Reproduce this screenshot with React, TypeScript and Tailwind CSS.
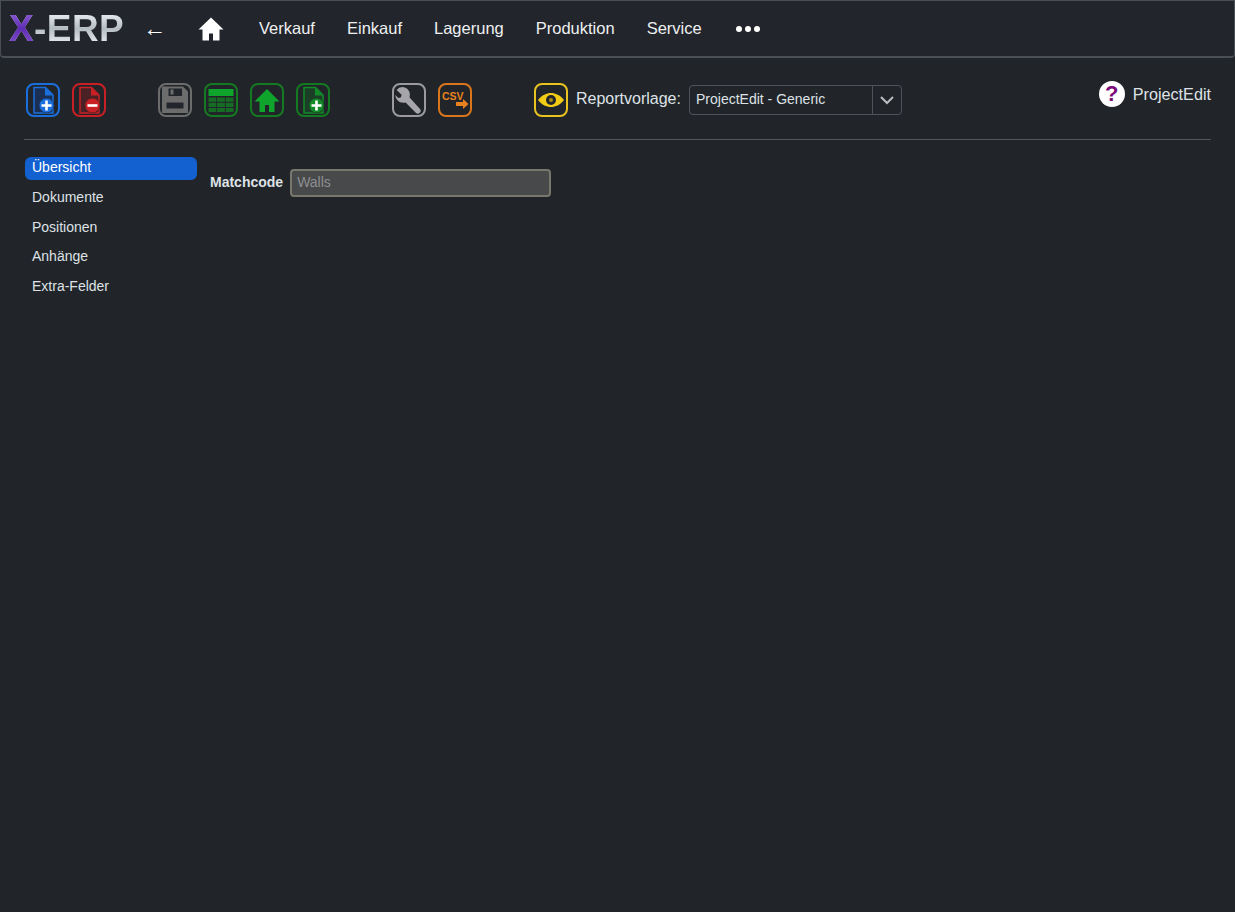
import { ReactNode } from "react";

const font = { fontFamily: '"Liberation Sans", Arial, sans-serif' };

const menu = ["Verkauf", "Einkauf", "Lagerung", "Produktion", "Service"];
const sideItems = ["Dokumente", "Positionen", "Anhänge", "Extra-Felder"];

const IconBox = ({ className, children }: { className: string; children: ReactNode }) => (
  <button className={`flex h-[34px] w-[34px] shrink-0 items-center justify-center rounded-lg border-2 ${className}`}>
    <svg viewBox="0 0 30 30" className="h-[30px] w-[30px]">
      {children}
    </svg>
  </button>
);

const FilePage = ({ color, dark, badge }: { color: string; dark: string; badge: string }) => (
  <>
    <path d="M6 2.500h11.500L25 10v18H6z" fill={dark} stroke={color} strokeWidth="1.500" />
    <path d="M17 2.500L25 10.500h-8z" fill={color} />
    <circle cx="18.500" cy="20.500" r="7.500" fill={color} stroke={dark} strokeWidth="0.800" />
    <path d={badge} stroke="#fff" strokeWidth="2.600" fill="none" />
  </>
);

const App = () => {
  return (
    <div className="min-h-[912px] bg-[#212529] text-[#dee2e6]" style={font}>
      <nav className="flex h-[58px] items-center rounded-b border border-b-2 border-[#4a4e55] bg-[#22252b]">
        <span className="ml-[8px] w-[116px] whitespace-nowrap bg-gradient-to-b from-[#f4f7f9] via-[#b4bdc4] to-[#f2f4f6] bg-clip-text text-[37px] font-bold leading-none tracking-[0.4px] text-transparent">
          <span className="bg-gradient-to-b from-[#9a68de] via-[#5f2ab4] to-[#8a5ad0] bg-clip-text text-transparent">X</span>
          -ERP
        </span>
        <span className="ml-[18px] w-[22px] text-[23px] font-light leading-none text-white">←</span>
        <svg viewBox="0 0 26 24" className="ml-[33px] h-[24px] w-[26px]">
          <path d="M13 0.500L0.500 12.500H4.500V23.500H11V16.500H15V23.500H21.500V12.500H25.500Z" fill="#fff" />
        </svg>
        <ul className="ml-[35px] flex gap-[32px] text-[16.5px] text-[#eef0f2]">
          {menu.map((item) => (
            <li key={item}>{item}</li>
          ))}
        </ul>
        <div className="ml-[34px] flex gap-[3px]">
          <span className="h-[6px] w-[6px] rounded-full bg-white" />
          <span className="h-[6px] w-[6px] rounded-full bg-white" />
          <span className="h-[6px] w-[6px] rounded-full bg-white" />
        </div>
      </nav>

      <div className="px-[24px]">
        <div className="flex h-[82px] items-start border-b border-[#53575c] pl-[2px] pt-[25px]">
          <div className="flex gap-[12px]">
            <IconBox className="border-[#1a6fdc]">
              <FilePage color="#1a6fdc" dark="#1b2f55" badge="M18.500 15.500v10M13.500 20.500h10" />
            </IconBox>
            <IconBox className="border-[#c92025]">
              <FilePage color="#c92025" dark="#4a2226" badge="M13.500 20.500h10" />
            </IconBox>
          </div>

          <div className="ml-[52px] flex gap-[12px]">
            <IconBox className="border-[#6c6c6c]">
              <path d="M2 1.500h21l5 5V28H2z" fill="#6c6c6c" />
              <path d="M8.500 3.500h13.500V11H8.500z" fill="#22262c" />
              <path d="M10.500 4.500h3v5h-3z" fill="#6c6c6c" />
              <path d="M6.500 17.500h17v6h-17z" fill="#22262c" />
            </IconBox>
            <IconBox className="border-[#137a22]">
              <path d="M2.500 4h25v7h-25z" fill="#0fa52c" />
              <path d="M2.500 12.500h7.800v4.200H2.500zM11.100 12.500h7.800v4.200h-7.800zM19.700 12.500h7.800v4.200h-7.800zM2.500 17.700h7.800v4.200H2.500zM11.100 17.700h7.800v4.200h-7.800zM19.700 17.700h7.800v4.200h-7.800zM2.500 22.900h7.800V27H2.500zM11.100 22.900h7.800V27h-7.800zM19.700 22.900h7.800V27h-7.800z" fill="#166b25" />
            </IconBox>
            <IconBox className="border-[#137a22]">
              <path d="M15 4L2.500 16.500H7.500V27H13V20h4v7h5.500V16.500h5z" fill="#0fa52c" />
            </IconBox>
            <IconBox className="border-[#137a22]">
              <FilePage color="#128a28" dark="#1a3f26" badge="M18.500 15.500v10M13.500 20.500h10" />
            </IconBox>
          </div>

          <div className="ml-[62px] flex gap-[12px]">
            <IconBox className="border-[#9a9a9f]">
              <path d="M11 2.500a7.500 7.500 0 0 0-8.400 2.600l5 4.600-.6 2.600-2.700.6-3-3a8 8 0 0 0 10.300 7.500l10.200 10.400a2.800 2.800 0 0 0 4-4L15.600 12.400A8 8 0 0 0 11 2.500z" fill="#a5a5aa" />
            </IconBox>
            <IconBox className="border-[#d9761c]">
              <text x="2" y="15" fontSize="10.500" fontWeight="700" fill="#e8821e" style={font}>CSV</text>
              <path d="M16 17h7v-3l5.500 5-5.500 5v-3h-7z" fill="#e8821e" />
            </IconBox>
          </div>

          <div className="ml-[62px]">
            <IconBox className="border-[#e8c320]">
              <path d="M2 15C6 10 10.500 8 15 8S24 10 28 15C24 20 19.500 22 15 22S6 20 2 15z" fill="#f2cb16" />
              <circle cx="15" cy="15" r="5" fill="#22262c" />
              <circle cx="15" cy="15" r="2" fill="#a88d14" />
            </IconBox>
          </div>

          <span className="ml-[8px] mt-[6px] w-[113px] text-[16px] leading-[20px]">Reportvorlage:</span>
          <div className="mt-[2px] flex h-[30px] w-[213px] items-center rounded border border-[#4f5359] text-[14px]">
            <span className="flex-1 pb-[2px] pl-[6px]">ProjectEdit - Generic</span>
            <span className="flex h-full w-[29px] items-center justify-center border-l border-[#4f5359]">
              <svg viewBox="0 0 16 16" className="h-[16px] w-[16px]">
                <path d="M2 5l6 6 6-6" fill="none" stroke="#b9bdc2" strokeWidth="2" />
              </svg>
            </span>
          </div>

          <div className="ml-auto -mt-[2px] flex items-center gap-[8px]">
            <span className="flex h-[26px] w-[26px] items-center justify-center rounded-full bg-white text-[22px] font-bold leading-none text-[#7a0a7a]">?</span>
            <span className="text-[16.200px]">ProjectEdit</span>
          </div>
        </div>

        <div className="flex pt-[17px]">
          <aside className="ml-[1px] w-[172px] text-[14px]">
            <div className="h-[23px] rounded-md bg-[#1361d0] pl-[7px] leading-[20px] text-white">Übersicht</div>
            {sideItems.map((item) => (
              <div key={item} className="mt-[6.800px] h-[23px] pl-[7px] leading-[20px]">
                {item}
              </div>
            ))}
          </aside>
          <div className="ml-[13px] mt-[12px] flex h-[28px] items-center gap-[7px]">
            <label className="pb-[2px] text-[14px] font-bold">Matchcode</label>
            <input
              readOnly
              placeholder="Walls"
              className="h-[28px] w-[261px] rounded-sm border-2 border-[#77776c] bg-[#48494b] px-[5px] pb-[2px] text-[14px] outline-none placeholder:text-[#8e8f91]"
            />
          </div>
        </div>
      </div>
    </div>
  );
};

export default App;
